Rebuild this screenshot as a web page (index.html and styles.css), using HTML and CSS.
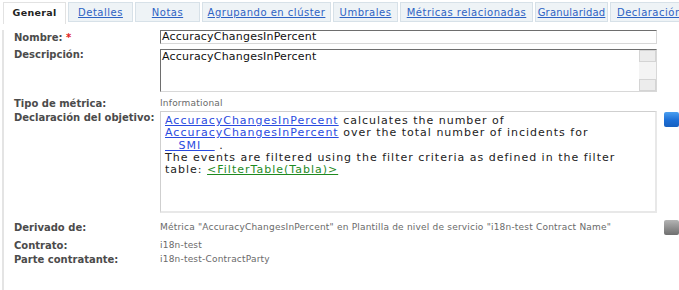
FILE: index.html
```html
<!DOCTYPE html>
<html lang="es">
<head>
  <meta charset="UTF-8" />
  <title>Métrica</title>
  <link rel="stylesheet" href="styles.css">
</head>
<body>

  <div class="tabs">
    <div class="tab active">General</div>
    <div class="tab"><a href="#">Detalles</a></div>
    <div class="tab"><a href="#">Notas</a></div>
    <div class="tab wide"><a href="#">Agrupando en clúster</a></div>
    <div class="tab"><a href="#">Umbrales</a></div>
    <div class="tab wider"><a href="#">Métricas relacionadas</a></div>
    <div class="tab mid"><a href="#">Granularidad</a></div>
    <div class="tab last"><a href="#">Declaración</a></div>
  </div>

  <div class="panel">
    <div class="row row-name">
      <div class="label">Nombre: <span class="req">*</span></div>
      <div class="field"><div class="input">AccuracyChangesInPercent</div></div>
      <div class="side"></div>
    </div>

    <div class="row row-desc">
      <div class="label">Descripción:</div>
      <div class="field">
        <div class="textarea">
          <div class="textarea-text">AccuracyChangesInPercent</div>
          <div class="scrollbar">
            <span class="sb-btn"></span>
            <span class="sb-btn"></span>
          </div>
        </div>
      </div>
      <div class="side"></div>
    </div>

    <div class="row row-type">
      <div class="label">Tipo de métrica:</div>
      <div class="field value">Informational</div>
      <div class="side"></div>
    </div>

    <div class="row row-goal">
      <div class="label">Declaración del objetivo:</div>
      <div class="field">
        <div class="goal">
          <a href="#">AccuracyChangesInPercent</a> calculates the number of<br>
          <a href="#">AccuracyChangesInPercent</a> over the total number of incidents for<br>
          <a href="#" class="smi">&nbsp;&nbsp;&nbsp;SMI&nbsp;&nbsp;&nbsp;</a> .<br>
          The events are filtered using the filter criteria as defined in the filter<br>
          table: <a href="#" class="green">&lt;FilterTable(Tabla)&gt;</a>
        </div>
      </div>
      <div class="side"><span class="btn blue"></span></div>
    </div>

    <div class="row row-derived">
      <div class="label">Derivado de:</div>
      <div class="field value">Métrica "AccuracyChangesInPercent" en Plantilla de nivel de servicio "i18n-test Contract Name"</div>
      <div class="side"><span class="btn gray"></span></div>
    </div>

    <div class="row row-contract">
      <div class="label">Contrato:</div>
      <div class="field value">i18n-test</div>
      <div class="side"></div>
    </div>

    <div class="row row-party">
      <div class="label">Parte contratante:</div>
      <div class="field value">i18n-test-ContractParty</div>
      <div class="side"></div>
    </div>
  </div>

</body>
</html>
```

FILE: styles.css
```css
:root {
  --label-color: #4b4b4b;
  --value-color: #6a6a6a;
  --link-color: #2d62c4;
  --tab-bg: #eef3f6;
  --tab-border: #d7e1e8;
}

* {
  margin: 0;
  padding: 0;
  box-sizing: border-box;
}

html, body {
  width: 679px;
  height: 290px;
  overflow: hidden;
  background: #fff;
  font-family: "DejaVu Sans", Verdana, sans-serif;
}

/* === Tabs === */
.tabs {
  display: flex;
  gap: 2px;
  padding: 2px 0 0 3px;
  height: 22px;
}

.tab {
  width: 65px;
  height: 20px;
  flex: none;
  display: flex;
  align-items: center;
  justify-content: center;
  background: var(--tab-bg);
  border: 1px solid var(--tab-border);
  font-size: 10px;
  letter-spacing: 0.5px;
  white-space: nowrap;
  overflow: hidden;
}

.tab a {
  color: var(--link-color);
}

.tab.wide { width: 129px; }
.tab.wider { width: 133px; }
.tab.mid { width: 73px; letter-spacing: 0.2px; }
.tab.last { width: 80px; justify-content: flex-start; padding-left: 6px; }

.tab.active {
  width: 63px;
  height: 22px;
  background: #fff;
  border-color: #e2e2e2;
  border-bottom: none;
  font-weight: bold;
  font-size: 9.5px;
  letter-spacing: 0.3px;
  color: #222;
  padding-bottom: 2px;
}

/* === Panel === */
.panel {
  margin-left: 2px;
  border-left: 2px solid #e4e4e4;
  height: 268px;
  padding-left: 10px;
}

.row {
  display: grid;
  grid-template-columns: 146px 497px 22px;
  align-items: center;
}

.side {
  display: flex;
  justify-content: flex-end;
}

.label {
  font-size: 10px;
  font-weight: bold;
  color: var(--label-color);
}

.req {
  color: #e02020;
}

.value {
  font-size: 9px;
  letter-spacing: 0.2px;
  color: var(--value-color);
  white-space: nowrap;
}

.row-name { margin-top: 8px; height: 14px; }
.row-desc { margin-top: 5px; height: 43px; align-items: start; }
.row-type { margin-top: 4px; height: 14px; }
.row-goal { margin-top: 1px; height: 102px; align-items: start; }
.row-derived { margin-top: 6px; height: 16px; }
.row-contract { margin-top: 4px; height: 12px; }
.row-party { margin-top: 2px; height: 12px; }

.row-goal .label {
  margin-top: 1px;
}

.input {
  height: 14px;
  border: 1px solid #d8d8d8;
  border-top-color: #6e6e6e;
  border-left-color: #6e6e6e;
  font-size: 11px;
  letter-spacing: 0.2px;
  line-height: 12px;
  padding-left: 1px;
  color: #111;
}

.textarea {
  display: flex;
  height: 43px;
  border: 1px solid #d8d8d8;
  border-top-color: #6e6e6e;
  border-left-color: #6e6e6e;
}

.textarea-text {
  flex: 1;
  font-size: 11px;
  letter-spacing: 0.2px;
  line-height: 13px;
  padding-left: 1px;
  color: #111;
}

.scrollbar {
  width: 17px;
  background: #f4f4f4;
  display: flex;
  flex-direction: column;
  justify-content: space-between;
}

.sb-btn {
  height: 12px;
  background: #ececec;
  border: 1px solid #d4d4d4;
}

.goal {
  height: 102px;
  border: 2px solid #e8e8e8;
  border-top: 1px solid #cfcfcf;
  border-left: 1px solid #cfcfcf;
  padding: 3px 0 0 4px;
  font-size: 11px;
  letter-spacing: 1px;
  line-height: 12.3px;
  color: #222;
  white-space: nowrap;
}

.goal a {
  color: #2a4be0;
}

.goal a.green {
  color: #1f8a1f;
}

.btn {
  width: 15px;
  height: 15px;
  border-radius: 2px;
  display: block;
}

.btn.blue {
  margin-top: 1px;
  background: linear-gradient(#4b9ff0, #1d6fd6 55%, #1760c0);
}

.btn.gray {
  margin-top: 1px;
  background: linear-gradient(#b4b4b4, #8d8d8d 55%, #6f6f6f);
}
```
